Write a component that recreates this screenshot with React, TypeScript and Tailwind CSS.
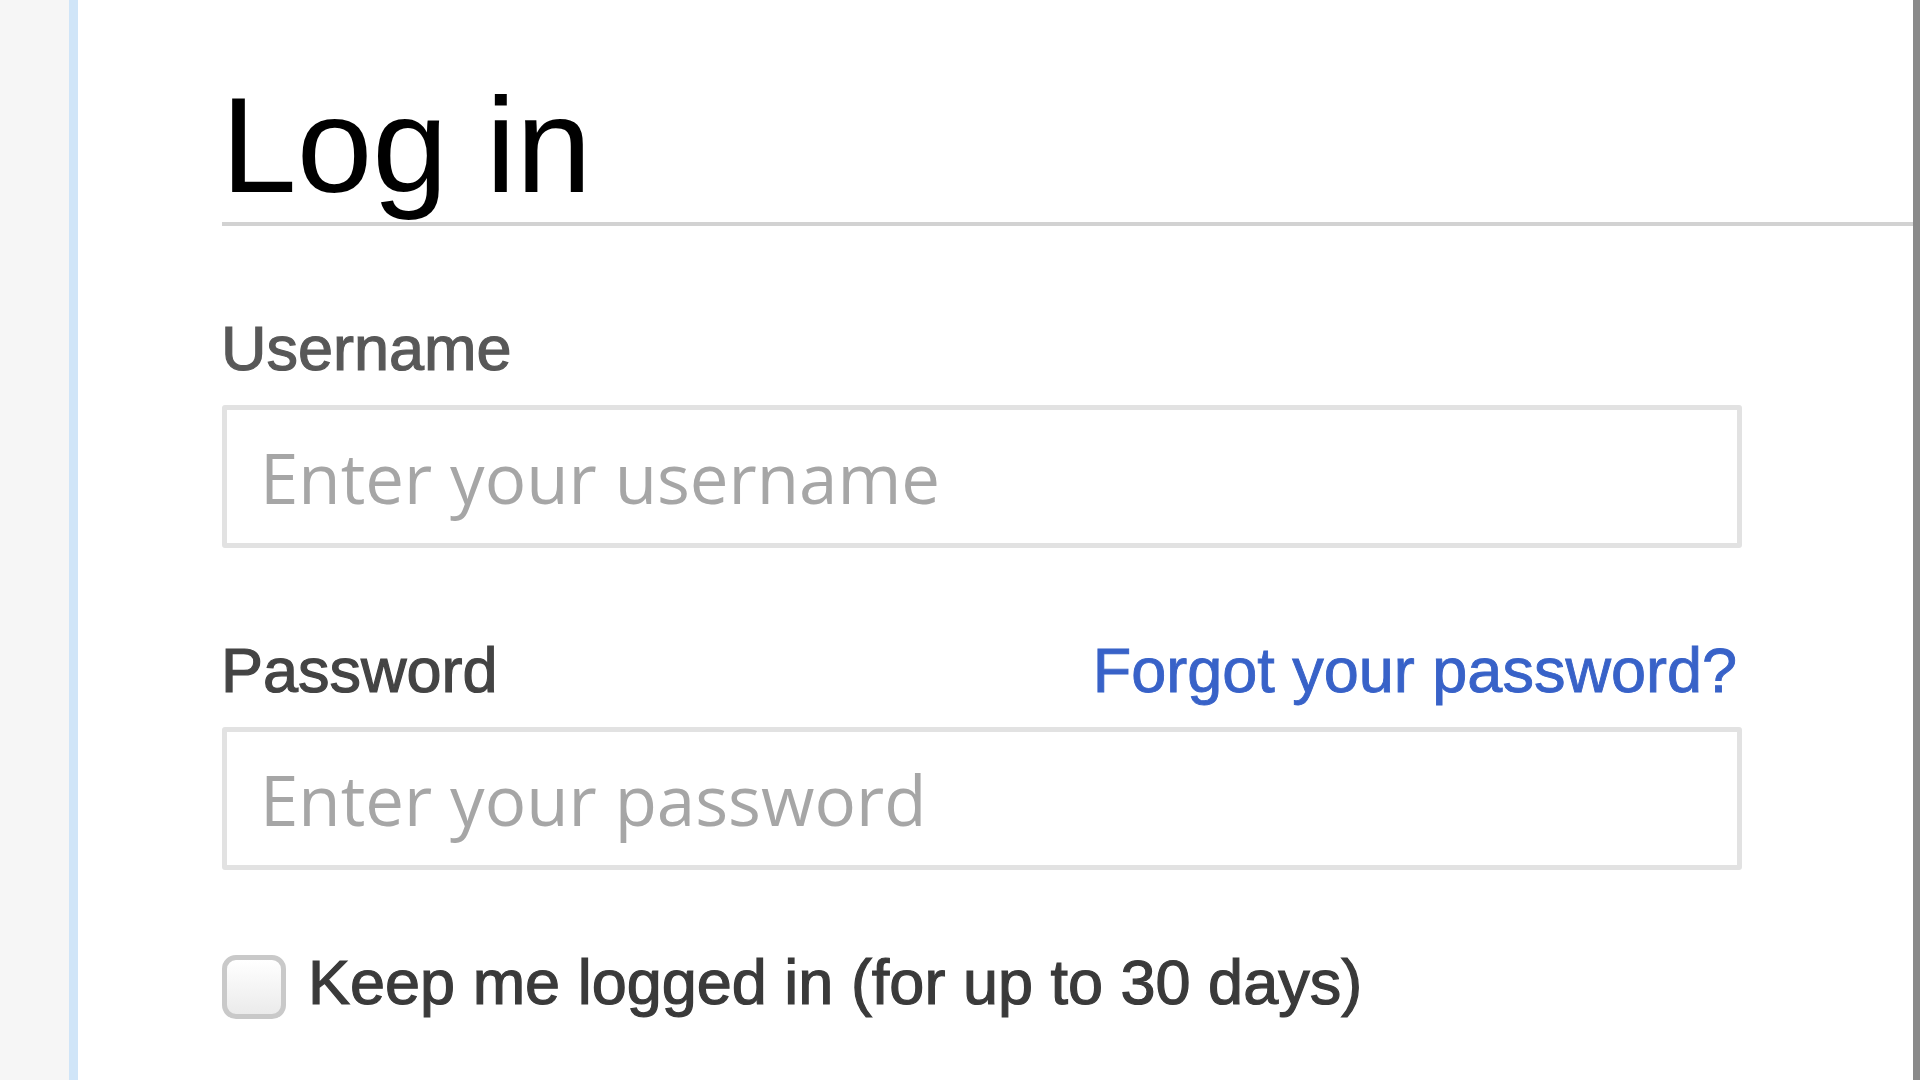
import React from "react";

export default function App() {
  return (
    <div className="flex h-[1080px] w-[1920px] overflow-hidden bg-white font-['Liberation_Sans',Arial,sans-serif]">
      <div className="w-[69px] shrink-0 bg-[#f6f6f6]" />
      <div className="w-[9px] shrink-0 bg-[#d0e5f8]" />
      <main className="flex-1 pl-[142px] pt-[77px]">
        <h1 className="ml-[2px] border-b-[4px] border-[#d2d2d2] pb-[9px] text-[136px] font-normal leading-[136px] text-black">
          <span className="ml-[-1px]">Log in</span>
        </h1>
        <form className="flex flex-col" onSubmit={(e) => e.preventDefault()}>
          <label
            htmlFor="user"
            className="ml-[1px] mt-[91px] text-[63px] leading-[62px] text-[#585858] [-webkit-text-stroke:1.2px_#585858]"
          >
            Username
          </label>
          <input
            id="user"
            type="text"
            placeholder="Enter your username"
            className="ml-[2px] mt-[26px] h-[143px] w-[1520px] rounded-[3px] border-[5px] border-[#e2e2e2] bg-white pl-[33px] font-['Open_Sans',sans-serif] text-[69px] text-[#222] outline-none placeholder:text-[#a6a6a6]"
          />
          <div className="mt-[91px] flex w-[1522px] items-baseline justify-between">
            <label
              htmlFor="pass"
              className="ml-[1px] text-[63px] leading-[62px] text-[#444] [-webkit-text-stroke:1.2px_#444]"
            >
              Password
            </label>
            <a
              href="#"
              className="mr-[5px] text-[63px] leading-[62px] text-[#3862c8] [-webkit-text-stroke:0.9px_#3862c8]"
            >
              Forgot your password?
            </a>
          </div>
          <input
            id="pass"
            type="password"
            placeholder="Enter your password"
            className="ml-[2px] mt-[26px] h-[143px] w-[1520px] rounded-[3px] border-[5px] border-[#e2e2e2] bg-white pl-[33px] font-['Open_Sans',sans-serif] text-[69px] text-[#222] outline-none placeholder:text-[#a6a6a6]"
          />
          <label className="mt-[81px] flex items-start gap-[22px]">
            <span className="ml-[2px] mt-[4px] h-[64px] w-[64px] shrink-0 rounded-[14px] border-[5px] border-[#c9c9c9] bg-linear-to-b from-white to-[#ebebeb]" />
            <span className="text-[63px] leading-[62px] text-[#3a3a3a] [-webkit-text-stroke:1.2px_#3a3a3a]">
              Keep me logged in (for up to 30 days)
            </span>
          </label>
        </form>
      </main>
      <div className="w-[7px] shrink-0 bg-[#8a8a8a]" />
    </div>
  );
}
